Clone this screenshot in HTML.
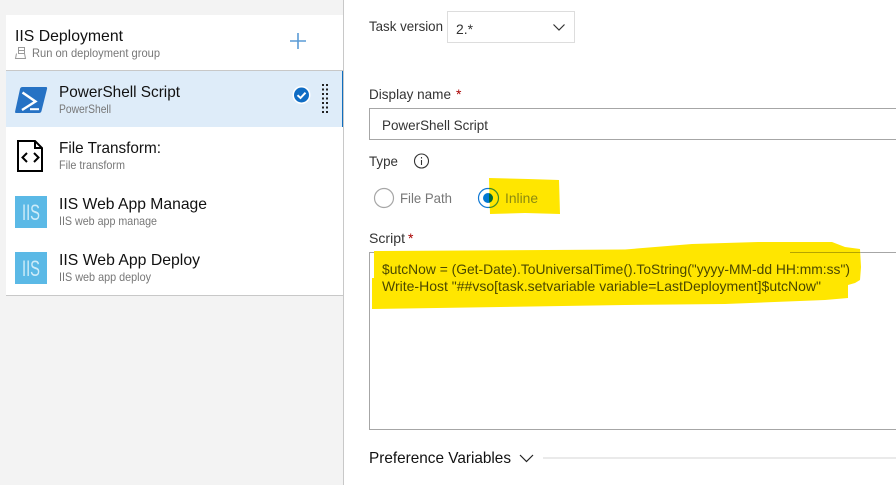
<!DOCTYPE html>
<html><head><meta charset="utf-8"><style>
html,body{margin:0;padding:0;background:#fff;width:896px;height:485px;overflow:hidden}
svg{display:block}
text{font-family:"Liberation Sans",sans-serif}
</style></head><body>
<svg width="896" height="485" viewBox="0 0 896 485" xmlns="http://www.w3.org/2000/svg">
<rect width="896" height="485" fill="#fff"/>
<rect width="343" height="485" fill="#f3f3f3"/>
<rect x="343" width="1" height="485" fill="#c8c8c8"/>
<rect x="6" y="15" width="337" height="280" fill="#fff"/>
<rect x="6" y="295" width="337" height="1" fill="#c8c8c8"/>
<rect x="6" y="70" width="337" height="1" fill="#c8c8c8"/>
<rect x="6" y="71" width="337" height="56" fill="#deecf9"/>
<rect x="342" y="71" width="1" height="56" fill="#106ebe"/>

<text x="15" y="41" font-size="16" fill="#111" textLength="108" lengthAdjust="spacingAndGlyphs">IIS Deployment</text>
<g fill="none" stroke="#9a9a9a" stroke-width="1"><rect x="18.5" y="47.5" width="6" height="6"/><path d="M18.500 50.500h6"/><path d="M16.500 53.500L15.500 58.500H25.500V58.500L24.500 53.500"/></g>
<text x="32" y="57" font-size="12" fill="#777" textLength="128" lengthAdjust="spacingAndGlyphs">Run on deployment group</text>
<path d="M298 33v16M290 41h16" stroke="#5a9bd5" stroke-width="1.6" fill="none"/>

<path d="M20 89Q20.500 87 22.500 87H46Q47.500 87 47 89L41.500 111Q41 113 39 113H16Q14.700 113 15.200 111Z" fill="#2672c4"/>
<path d="M22.500 92.500L35.500 101.500L22 110" stroke="#fff" stroke-width="2.400" fill="none"/>
<path d="M30 109.200H39" stroke="#fff" stroke-width="2"/>
<text x="59" y="97" font-size="16" fill="#111" textLength="121" lengthAdjust="spacingAndGlyphs">PowerShell Script</text>
<text x="59" y="113" font-size="12" fill="#777" textLength="52" lengthAdjust="spacingAndGlyphs">PowerShell</text>
<circle cx="301.500" cy="95" r="9" fill="#fff"/>
<circle cx="301.500" cy="95" r="7.500" fill="#0f6cc4"/>
<path d="M297.500 95.200L300.500 98L305.500 92.700" stroke="#fff" stroke-width="2" fill="none"/>
<g fill="#222">
<rect x="322" y="84" width="2" height="2"/><rect x="326" y="84" width="2" height="2"/>
<rect x="322" y="88.500" width="2" height="2"/><rect x="326" y="88.500" width="2" height="2"/>
<rect x="322" y="93" width="2" height="2"/><rect x="326" y="93" width="2" height="2"/>
<rect x="322" y="97.500" width="2" height="2"/><rect x="326" y="97.500" width="2" height="2"/>
<rect x="322" y="102" width="2" height="2"/><rect x="326" y="102" width="2" height="2"/>
<rect x="322" y="106.500" width="2" height="2"/><rect x="326" y="106.500" width="2" height="2"/>
<rect x="322" y="111" width="2" height="2"/><rect x="326" y="111" width="2" height="2"/>
</g>

<path d="M18 141H35L42 148V171H18Z M35 141V148H42" fill="none" stroke="#000" stroke-width="2"/>
<path d="M27 153L22.500 157.500L27 162M34 153L38.500 157.500L34 162" fill="none" stroke="#000" stroke-width="2"/>
<text x="59" y="153" font-size="16" fill="#111" textLength="102" lengthAdjust="spacingAndGlyphs">File Transform:</text>
<text x="59" y="169" font-size="12" fill="#777" textLength="66" lengthAdjust="spacingAndGlyphs">File transform</text>

<rect x="15" y="196" width="32" height="32" fill="#5bb9e6"/>
<text x="22" y="220" font-size="22" fill="#cfecf9" textLength="18" lengthAdjust="spacingAndGlyphs">IIS</text>
<text x="59" y="209" font-size="16" fill="#111" textLength="148" lengthAdjust="spacingAndGlyphs">IIS Web App Manage</text>
<text x="59" y="225" font-size="12" fill="#777" textLength="98" lengthAdjust="spacingAndGlyphs">IIS web app manage</text>

<rect x="15" y="252" width="32" height="32" fill="#5bb9e6"/>
<text x="22" y="276" font-size="22" fill="#cfecf9" textLength="18" lengthAdjust="spacingAndGlyphs">IIS</text>
<text x="59" y="265" font-size="16" fill="#111" textLength="141" lengthAdjust="spacingAndGlyphs">IIS Web App Deploy</text>
<text x="59" y="281" font-size="12" fill="#777" textLength="92" lengthAdjust="spacingAndGlyphs">IIS web app deploy</text>

<text x="369" y="31" font-size="14" fill="#333" textLength="74" lengthAdjust="spacingAndGlyphs">Task version</text>
<rect x="447.500" y="11.500" width="127" height="31" fill="#fff" stroke="#ddd"/>
<text x="456" y="34" font-size="14" fill="#333" textLength="17" lengthAdjust="spacingAndGlyphs">2.*</text>
<path d="M553.500 24.500L559 30L564.500 24.500" fill="none" stroke="#333" stroke-width="1.200"/>

<text x="369" y="99" font-size="14" fill="#333" textLength="82" lengthAdjust="spacingAndGlyphs">Display name</text>
<text x="456" y="99" font-size="14" fill="#a80000">*</text>
<rect x="369.500" y="108.500" width="540" height="31" fill="#fff" stroke="#a6a6a6"/>
<text x="382" y="130" font-size="14" fill="#333" textLength="106" lengthAdjust="spacingAndGlyphs">PowerShell Script</text>

<text x="369" y="166" font-size="14" fill="#333" textLength="29" lengthAdjust="spacingAndGlyphs">Type</text>
<circle cx="421.500" cy="161" r="7" fill="none" stroke="#333" stroke-width="1.100"/>
<path d="M421.500 160v5M421.500 157v1.500" stroke="#333" stroke-width="1.100"/>

<circle cx="384" cy="198" r="9.500" fill="#fff" stroke="#a6a6a6" stroke-width="1.200"/>
<text x="400" y="203" font-size="14" fill="#777" textLength="52" lengthAdjust="spacingAndGlyphs">File Path</text>
<circle cx="488" cy="198" r="9.500" fill="#fff" stroke="#0f78d4" stroke-width="1.200"/>
<circle cx="488" cy="198" r="5" fill="#0078d4"/>
<path d="M489 178L528 179L559 180L560 214L525 213L490 214Z" fill="#ffe600"/>
<path d="M489 188.500A9.500 9.500 0 0 1 489 207.500" fill="none" stroke="#3d8a2a" stroke-width="1.200"/>
<path d="M489 193.100A5 5 0 0 1 489 202.900Z" fill="#006a3a"/>
<text x="505" y="203" font-size="14" fill="#8c8a10" textLength="33" lengthAdjust="spacingAndGlyphs">Inline</text>

<text x="369" y="243" font-size="14" fill="#333" textLength="36" lengthAdjust="spacingAndGlyphs">Script</text>
<text x="408" y="243" font-size="14" fill="#a80000">*</text>
<rect x="369.500" y="252.500" width="540" height="177" fill="#fff" stroke="#a6a6a6"/>
<path d="M374 251L625 249.500L692 244L758 242L832 242L845 247L860 249L861 267L860 280L855 283L848 285L848 298L825 300L725 304L625 305L372 309L372 278L374 278Z" fill="#ffe600"/>
<rect x="790" y="252" width="70" height="1" fill="#b5a400"/>
<text x="382" y="274" font-size="14" fill="#4b4800" textLength="468" lengthAdjust="spacingAndGlyphs">$utcNow = (Get-Date).ToUniversalTime().ToString("yyyy-MM-dd HH:mm:ss")</text>
<text x="382" y="291" font-size="14" fill="#4b4800" textLength="439" lengthAdjust="spacingAndGlyphs">Write-Host "##vso[task.setvariable variable=LastDeployment]$utcNow"</text>

<text x="369" y="463" font-size="16" fill="#111" textLength="142" lengthAdjust="spacingAndGlyphs">Preference Variables</text>
<path d="M520 455L526.500 461.500L533 455" fill="none" stroke="#222" stroke-width="1.200"/>
<rect x="543" y="457" width="353" height="2" fill="#eaeaea"/>
</svg>
</body></html>
